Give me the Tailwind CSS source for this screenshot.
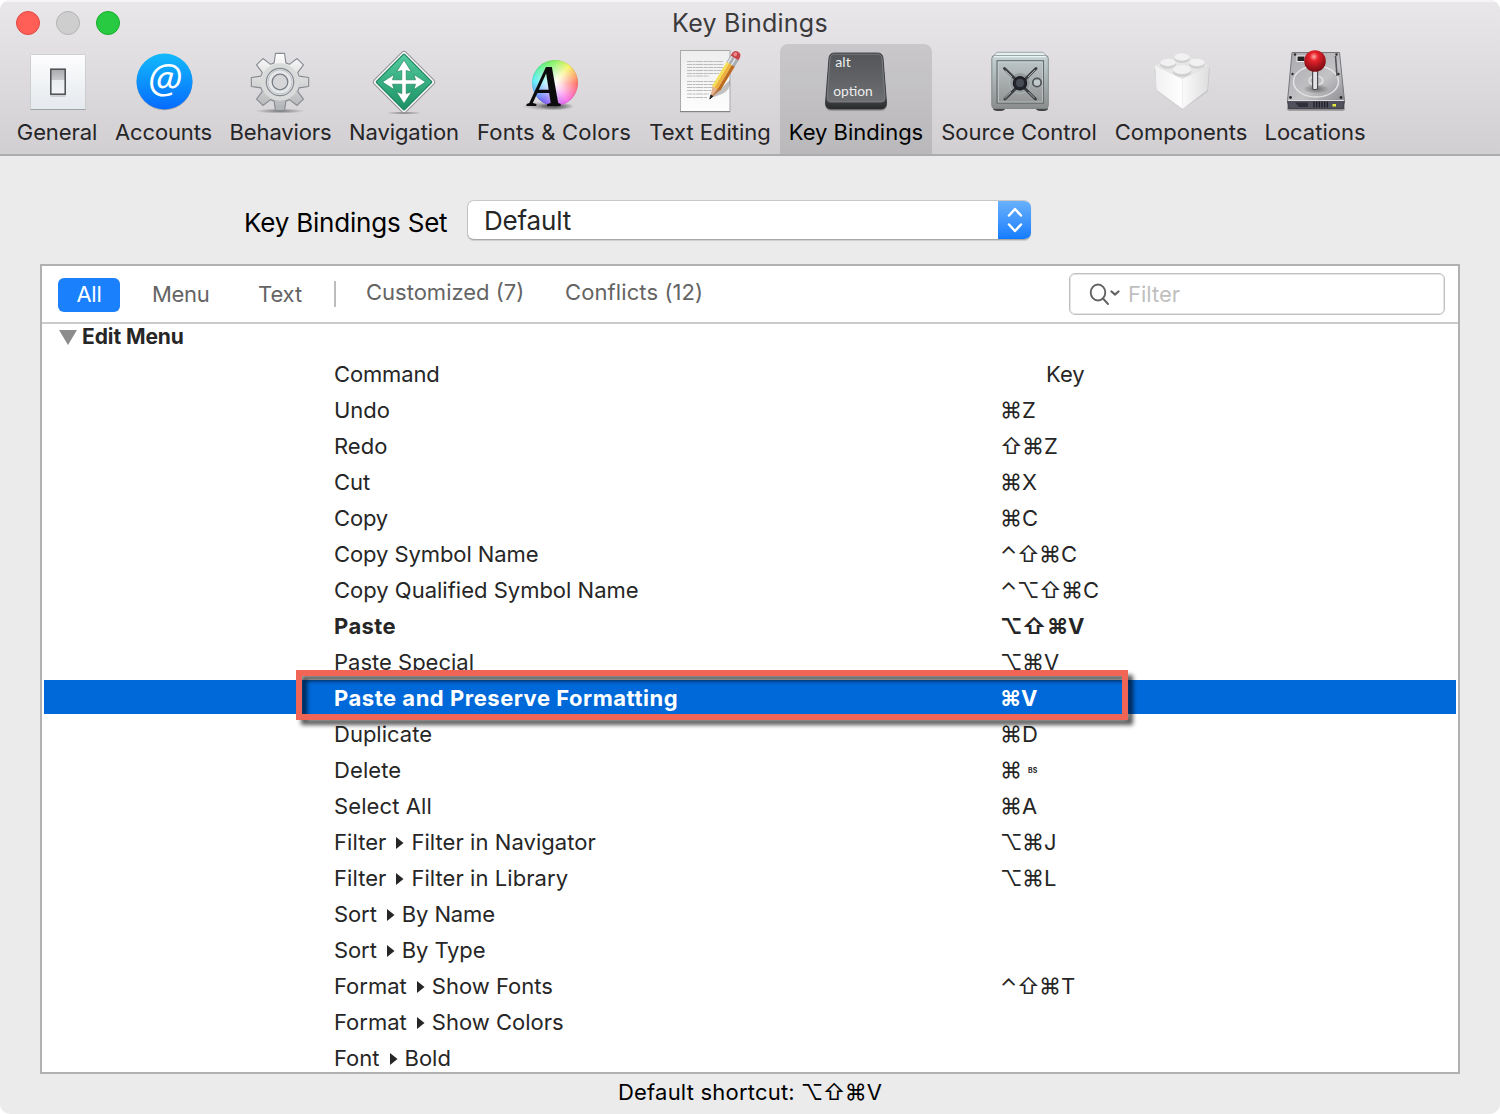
<!DOCTYPE html>
<html lang="en">
<head>
<meta charset="utf-8">
<title>Key Bindings</title>
<script src="https://cdn.jsdelivr.net/npm/@tailwindcss/browser@4"></script>
</head>
<body class="bg-white font-['Inter','Liberation_Sans',sans-serif] text-[#262626]">
<div class="w-[1500px] h-[1114px] overflow-hidden rounded-[10px] bg-[#ebebeb] flex flex-col">

  <header class="h-[156px] shrink-0 flex flex-col bg-linear-to-b from-[#e9e7ea] to-[#d1cfd2] border-t-2 border-t-[#f4f3f5] border-b-2 border-b-[#acabad]">
    <div class="h-[42px] shrink-0 grid grid-cols-3 items-center px-4">
      <div class="flex gap-4">
        <span class="size-6 rounded-full bg-[#ff5f57] border border-[#e2463f]"></span>
        <span class="size-6 rounded-full bg-[#cfcecf] border border-[#b4b3b5]"></span>
        <span class="size-6 rounded-full bg-[#28ca41] border border-[#14ae2b]"></span>
      </div>
      <h1 class="text-center text-[#3b3a3c] text-[25px] leading-[42px] tracking-[0.25px] whitespace-nowrap">Key Bindings</h1>
    </div>
    <nav class="flex pl-2 h-[110px] text-[22px] text-[#262527]">
      <div class="w-[98px] flex flex-col items-center">
        <svg class="size-[70px] shrink-0" viewBox="22 44 70 70">
          <defs><linearGradient id="gn" x2="0" y2="1"><stop stop-color="#fdfdfe"/><stop offset="1" stop-color="#e4e9ed"/></linearGradient>
          <linearGradient id="sw" x2="0" y2="1"><stop stop-color="#a8aaad"/><stop offset=".45" stop-color="#c9cbcd"/><stop offset=".45" stop-color="#e9ecee"/><stop offset="1" stop-color="#f2f4f5"/></linearGradient></defs>
          <rect x="30.500" y="54.500" width="55" height="55" rx="1" fill="url(#gn)" stroke="#c5c7ca" stroke-width=".8"/>
          <path d="M30.500 109.500h55" stroke="#9fa3a8"/>
          <rect x="50" y="69" width="16" height="28" rx="2" fill="#000" opacity=".12"/>
          <rect x="50.800" y="69.200" width="14.400" height="25" fill="url(#sw)" stroke="#4c4d50" stroke-width="1.500"/>
        </svg>
        <span class="leading-[36px] tracking-[-0.1px] whitespace-nowrap">General</span>
      </div>
      <div class="w-[115px] flex flex-col items-center">
        <svg class="size-[70px] shrink-0" viewBox="128.500 44 70 70">
          <defs><linearGradient id="ac" x2="0" y2="1"><stop stop-color="#12bafa"/><stop offset="1" stop-color="#066bff"/></linearGradient></defs>
          <circle cx="164" cy="82.300" r="28" fill="#000" opacity=".2"/>
          <circle cx="164" cy="81.500" r="28" fill="url(#ac)"/>
          <text x="164.500" y="92.500" text-anchor="middle" font-family="Open Sans" font-style="italic" font-size="40" fill="#fff">@</text>
        </svg>
        <span class="leading-[36px] tracking-[-0.12px] whitespace-nowrap">Accounts</span>
      </div>
      <div class="w-[119px] flex flex-col items-center">
        <svg class="size-[70px] shrink-0" viewBox="245.500 44 70 70">
          <defs><linearGradient id="ge" gradientUnits="userSpaceOnUse" x1="0" y1="53" x2="0" y2="111"><stop stop-color="#fff"/><stop offset="1" stop-color="#b0b1b2"/></linearGradient>
          <radialGradient id="gs"><stop stop-color="#000" stop-opacity=".45"/><stop offset="1" stop-color="#000" stop-opacity="0"/></radialGradient></defs>
          <ellipse cx="279.500" cy="111" rx="25" ry="2.500" fill="url(#gs)"/>
          <path id="gear" transform="translate(-.5 0)" fill="url(#ge)" stroke="#868b92" stroke-width="1.100" stroke-linejoin="round" d=""/>
          <circle cx="279.500" cy="82" r="18.800" fill="#d9dada"/>
          <circle cx="279.500" cy="82" r="13.700" fill="#e6e7e8" stroke="#858a92" stroke-width="1.200"/>
          <circle cx="279.500" cy="82" r="12" fill="none" stroke="#b5b8bc" stroke-width=".8"/>
          <circle cx="279.500" cy="82" r="7.800" fill="#d6d5d7" stroke="#7a7f87" stroke-width="1.300"/>
        </svg>
        <span class="leading-[36px] tracking-[-0.12px] whitespace-nowrap">Behaviors</span>
      </div>
      <div class="w-[128px] flex flex-col items-center">
        <svg class="size-[70px] shrink-0" viewBox="369 44 70 70">
          <defs><linearGradient id="nv" x2="1" y2="1"><stop stop-color="#54cba0"/><stop offset="1" stop-color="#1b9065"/></linearGradient></defs>
          <ellipse cx="404" cy="113" rx="18" ry="1.400" fill="url(#gs)"/>
          <g transform="rotate(45 404 82)">
            <rect x="381.500" y="59.500" width="45" height="45" rx="3" fill="#fdfdfd" stroke="#8f8f92" stroke-width="1"/>
            <rect x="384" y="62" width="40" height="40" rx="1" fill="url(#nv)" stroke="#1a7d59" stroke-width="1"/>
          </g>
          <path fill="#fff" stroke="#1c7e59" stroke-width=".6" d="M404 60L411.500 72L406.200 70.500V79.800H415.500L414 74.500L425.500 82L414 89.500L415.500 84.200H406.200V93.500L411.500 92L404 103.500L396.500 92L401.800 93.500V84.200H392.500L394 89.500L382.500 82L394 74.500L392.500 79.800H401.800V70.500L396.500 72Z"/>
        </svg>
        <span class="leading-[36px] tracking-[-0.08px] whitespace-nowrap">Navigation</span>
      </div>
      <div class="w-[172px] flex flex-col items-center">
        <svg class="size-[70px] shrink-0 overflow-visible" viewBox="519 44 70 70">
          <ellipse cx="548" cy="106" rx="26" ry="4.500" fill="url(#gs)"/>
          <ellipse cx="556" cy="106.500" rx="18" ry="4" fill="url(#gs)"/>
          <foreignObject x="532" y="60" width="46" height="46"><div class="size-[46px] rounded-full bg-[radial-gradient(circle,#fff_0%,#ffffffcc_20%,#ffffff00_78%),conic-gradient(#7cf04e,#f6f24e_40deg,#ff5a4e_92deg,#fb58e8_145deg,#5a4ff5_215deg,#3fe8f8_275deg,#45f08a_315deg,#5cee46_345deg,#7cf04e)] shadow-[inset_0_0_1px_#0006]"></div></foreignObject>
          <text x="529" y="106" font-family="Liberation Serif" font-weight="bold" font-style="italic" font-size="60" textLength="34" lengthAdjust="spacingAndGlyphs" fill="#0c0c0c">A</text>
        </svg>
        <span class="leading-[36px] tracking-[0.2px] whitespace-nowrap">Fonts &amp; Colors</span>
      </div>
      <div class="w-[140px] flex flex-col items-center">
        <svg class="size-[70px] shrink-0" viewBox="675 44 70 70">
          <defs><linearGradient id="pg" x2="0" y2="1"><stop stop-color="#eeeeee"/><stop offset="1" stop-color="#fdfdfd"/></linearGradient></defs>
          <rect x="680.500" y="50.500" width="49.500" height="61" fill="url(#pg)" stroke="#a9a9aa" stroke-width="1"/>
          <path d="M680 111.700h50" stroke="#7c7c7d" stroke-width="1"/>
          <g stroke="#bbbbbb" stroke-width="1.200" stroke-dasharray="5 .6 3 .5 7 .6 4 .5"><path d="M687 61.500h36M687 64.500h36M687 67.500h36M687 70.500h35M687 73.500h32M687 76h22M687 81.500h29M687 84.500h28M687 87.500h27M687 90.500h24M687 94h22M687 97.500h20"/></g>
          <path d="M710 98.500L730 80Q731 90 722 94Z" fill="#000" opacity=".22"/>
          <g transform="translate(709.800 99) rotate(31)">
            <path d="M0 0L-4.700 -14H4.700Z" fill="#e5b38b"/><path d="M0 0L4.700 -14H1.500Z" fill="#b97b50"/>
            <path d="M0 0L-1.200 -4H1.200Z" fill="#222" stroke="#222" stroke-width=".8"/>
            <path d="M-4.700 -12V-41H-1.500V-12.500Z" fill="#f4e05d"/><path d="M-1.800 -12.500V-41H1.500V-12Z" fill="#efb13e"/><path d="M1.500 -12V-41H4.700V-13Z" fill="#bd6a21"/>
            <rect x="-4.700" y="-48" width="9.400" height="7.500" fill="#a9adb1"/><path d="M-3 -48v7.500M1 -48v7.500" stroke="#e3e6e8" stroke-width="1.500"/>
            <path d="M-4.500 -48V-51Q-4 -55 0 -55T4.500 -51V-48Z" fill="#c8434a"/><ellipse cx="-1.200" cy="-51.500" rx="1.800" ry="2" fill="#e98a8c"/>
          </g>
        </svg>
        <span class="leading-[36px] whitespace-nowrap">Text Editing</span>
      </div>
      <div class="w-[152px] flex flex-col items-center rounded-t-lg bg-black/11 text-black">
        <svg class="size-[70px] shrink-0" viewBox="821 44 70 70">
          <defs><linearGradient id="kc" x2="0" y2="1"><stop stop-color="#535558"/><stop offset="1" stop-color="#6d6f72"/></linearGradient>
          <linearGradient id="kb" x2="0" y2="1"><stop offset=".75" stop-color="#505255"/><stop offset="1" stop-color="#28292b"/></linearGradient></defs>
          <path d="M829 60Q829 54 834 54H877Q882 54 883 60L887 104Q887 111 881 111H831Q825 111 825.500 104Z" fill="#000" opacity=".2"/>
          <path d="M829 58Q829.500 53 834.500 53H877.500Q882.500 53 883 58L886.500 103Q886.500 109 881 109H831Q825.500 109 825.500 103Z" fill="url(#kb)" stroke="#2d2e30" stroke-width=".8"/>
          <path d="M830 58.500Q830.500 54.200 834.500 54.200H877.500Q881.500 54.200 882 58.500L885 98Q885 102 881 102H831Q827 102 827.200 98Z" fill="url(#kc)" stroke="#85878a" stroke-width=".8"/>
          <text x="835.300" y="67" font-family="Lato" font-size="12.500" textLength="15.500" lengthAdjust="spacingAndGlyphs" fill="#ededed">alt</text>
          <text x="833.300" y="96" font-family="Lato" font-size="12.500" textLength="39.500" lengthAdjust="spacingAndGlyphs" fill="#ededed">option</text>
        </svg>
        <span class="leading-[36px] whitespace-nowrap">Key Bindings</span>
      </div>
      <div class="w-[174px] flex flex-col items-center">
        <svg class="size-[70px] shrink-0" viewBox="984 44 70 70">
          <defs><linearGradient id="sf" x2="0" y2="1"><stop stop-color="#c5d4d6"/><stop offset="1" stop-color="#8b8d8e"/></linearGradient>
          <linearGradient id="sd" x2="0" y2="1"><stop stop-color="#bbc5c6"/><stop offset="1" stop-color="#949494"/></linearGradient></defs>
          <ellipse cx="999" cy="109" rx="6" ry="2" fill="#454648"/><ellipse cx="1042" cy="109" rx="6" ry="2" fill="#454648"/>
          <path d="M997 52.300H1043L1048 57H992Z" fill="#e3efef" stroke="#8e9899" stroke-width=".8"/>
          <rect x="991.800" y="55.500" width="56.500" height="53" rx="3" fill="url(#sf)" stroke="#7d8485" stroke-width=".9"/>
          <path d="M994 56.500h52" stroke="#e8f3f3" stroke-width="1.500"/>
          <rect x="997" y="60.700" width="46.500" height="42.500" fill="url(#sd)" stroke="#666c6d" stroke-width="1.100"/>
          <rect x="998.300" y="62" width="44" height="40" fill="none" stroke="#d4dddd" stroke-width=".5"/>
          <circle cx="1020" cy="83" r="10.500" fill="#979d9e" stroke="#adb8b9" stroke-width="1"/>
          <path d="M1004.500 68.500L1035.500 99M1036 68.500L1005 99" stroke="#3b3d40" stroke-width="2.800" stroke-linecap="round"/>
          <path d="M1012 77L1005.500 70.500M1028 77L1035 70M1011 92L1005 98.500M1028.500 92L1034.500 98" stroke="#b9bdbf" stroke-width=".9"/>
          <circle cx="1020" cy="83.300" r="6.700" fill="#22252c" stroke="#14161a"/>
          <circle cx="1020" cy="83" r="4" fill="#474c57"/>
          <circle cx="1037" cy="82.500" r="4.200" fill="#c2cacb" stroke="#4e5354" stroke-width="1.700"/>
        </svg>
        <span class="leading-[36px] whitespace-nowrap">Source Control</span>
      </div>
      <div class="w-[150px] flex flex-col items-center">
        <svg class="size-[70px] shrink-0" viewBox="1146 44 70 70">
          <defs><linearGradient id="bl"><stop stop-color="#f1f1f1"/><stop offset="1" stop-color="#fff"/></linearGradient><linearGradient id="br"><stop stop-color="#fafafa"/><stop offset="1" stop-color="#dededf"/></linearGradient></defs>
          <path d="M1154 70L1182 55L1210 68L1208 92L1182 109.500L1158 92Z" fill="#000" opacity=".08"/>
          <path d="M1155 65.500L1182.500 54L1209 65.500L1182.500 79Z" fill="#e6e6e6"/>
          <path d="M1155 65.500L1182.500 79V109L1158 91Q1156.800 90 1156.600 88Z" fill="url(#bl)"/>
          <path d="M1209 65.500L1182.500 79V109L1206 91Q1207.200 90 1207.400 88Z" fill="url(#br)"/>
          <g fill="#d0d0d1"><ellipse cx="1182" cy="59" rx="8" ry="4"/><ellipse cx="1168" cy="64.500" rx="8" ry="4.200"/><ellipse cx="1197" cy="64.500" rx="8" ry="4.200"/><ellipse cx="1182" cy="72" rx="9.200" ry="5"/></g>
          <g fill="#f1f1f1"><ellipse cx="1182" cy="57" rx="7.700" ry="3.700"/><ellipse cx="1168" cy="62.500" rx="7.700" ry="3.700"/><ellipse cx="1197" cy="62.500" rx="7.700" ry="3.700"/><ellipse cx="1182" cy="69.500" rx="9" ry="4.600"/></g>
        </svg>
        <span class="leading-[36px] whitespace-nowrap">Components</span>
      </div>
      <div class="w-[118px] flex flex-col items-center">
        <svg class="size-[70px] shrink-0" viewBox="1280 44 70 70">
          <defs><linearGradient id="hd" x2="1" y2="1"><stop stop-color="#a9a9ad"/><stop offset=".6" stop-color="#c3c3c6"/><stop offset="1" stop-color="#8e8e92"/></linearGradient>
          <radialGradient id="rb" cx=".45" cy=".3" r=".65"><stop stop-color="#ffb0a8"/><stop offset=".3" stop-color="#e8222b"/><stop offset="1" stop-color="#7e0d14"/></radialGradient></defs>
          <rect x="1287" y="106" width="58" height="5" rx="2" fill="#000" opacity=".25"/>
          <path d="M1292 52.500H1339.500L1344.500 101H1287.500Z" fill="url(#hd)" stroke="#77777b" stroke-width="1"/>
          <path d="M1287.500 100.500H1344.500L1343.500 108.700H1288.500Z" fill="#50515c" stroke="#303138" stroke-width=".8"/>
          <path d="M1287.500 100.500h57" stroke="#dcdce0"/>
          <path d="M1295 102.500L1308 102.500V107H1299Z" fill="#2e2f38"/>
          <path d="M1314 101.500v6M1316.700 101.500v6M1319.400 101.500v6M1322 101.500v6M1324.700 101.500v6M1327.400 101.500v6" stroke="#1d1e25" stroke-width="1.300"/>
          <rect x="1332.500" y="104" width="3.500" height="2.500" fill="#e3ec3b"/>
          <ellipse cx="1316" cy="81.500" rx="22.500" ry="15.500" fill="none" stroke="#e4e4e7" stroke-width="1.400"/>
          <ellipse cx="1316" cy="89" rx="13" ry="5" fill="url(#gs)"/>
          <ellipse cx="1316" cy="80.500" rx="7" ry="4.500" fill="none" stroke="#e9e9eb" stroke-width="1.200"/>
          <rect x="1297" y="56" width="8" height="5.500" fill="#222" stroke="#efefef" stroke-width="1"/>
          <path d="M1335.500 56L1337 76" stroke="#55555a" stroke-width="1.600"/>
          <g fill="#2a2a2d"><circle cx="1295" cy="54.500" r="1.200"/><circle cx="1336.500" cy="54.500" r="1.200"/><circle cx="1292.500" cy="74" r="1.200"/><circle cx="1338.500" cy="74" r="1.200"/><circle cx="1290.500" cy="97.500" r="1.400"/><circle cx="1341" cy="97.500" r="1.400"/></g>
          <rect x="1312.600" y="70" width="5" height="19.500" rx="1.500" fill="#e3e3e5" stroke="#4b4b4f" stroke-width="1.200"/>
          <circle cx="1315" cy="61" r="10.800" fill="url(#rb)"/>
        </svg>
        <span class="leading-[36px] whitespace-nowrap">Locations</span>
      </div>
    </nav>
  </header>

  <main class="px-10 pt-11 flex flex-col">
    <div class="h-10 flex items-center pl-[204px]">
      <label class="w-[223px] pt-1.5 text-[26px] leading-9 tracking-[-0.2px] text-black whitespace-nowrap">Key Bindings Set</label>
      <div class="w-[564px] h-10 flex rounded-[7px] overflow-hidden bg-white border border-r-0 border-t-[#c8c8c8] border-l-[#c4c4c4] border-b-[#a8a8a8] shadow-[0_1px_1px_#0002]">
        <span class="flex-1 pl-4 text-[26px] leading-[40px] tracking-[-0.18px]">Default</span>
        <span class="-my-px w-[33px] bg-linear-to-b from-[#6ab2fa] to-[#0a7aff] flex items-center justify-center">
          <svg class="w-4 h-7" viewBox="0 0 16 28" fill="none" stroke="#fff" stroke-width="2.500" stroke-linecap="round" stroke-linejoin="round"><path d="M2 9.500L8 3L14 9.500M2 18.500L8 25L14 18.500"/></svg>
        </span>
      </div>
    </div>

    <section class="mt-6 w-[1420px] h-[810px] bg-white border-2 border-[#b1b1b1] flex flex-col relative">
      <div class="h-[58px] shrink-0 border-b-2 border-[#cbcbcb] flex items-center pl-4 pr-[13px] text-[22px] text-[#646464] whitespace-nowrap">
        <span class="w-[62px] h-[34px] mt-0.5 rounded-md bg-[#1a80fc] text-white text-center leading-[32px] tracking-[-0.2px]">All</span>
        <span class="ml-[32px] w-[106px] tracking-[-0.3px]">Menu</span>
        <span class="w-[76px] tracking-[-0.1px]">Text</span>
        <span class="w-0.5 h-[26px] bg-[#bdbdbd]"></span>
        <span class="ml-[30px] w-[199px] pb-1">Customized (7)</span>
        <span class="pb-1 tracking-[0.1px]">Conflicts (12)</span>
        <div class="ml-auto w-[376px] h-[42px] rounded-md border border-[#c0c0c0] shadow-[inset_0_0_0_1px_#e4e4e4] flex items-center pl-[19px] text-[#bfbfbf]">
          <svg class="w-8 h-6 mr-[7px]" viewBox="0 0 32 24" fill="none" stroke="#636363" stroke-width="1.900" stroke-linecap="round"><ellipse cx="9" cy="10.500" rx="7.300" ry="8"/><path d="M14 16.500L19 22"/><path d="M22.500 9.500L26 12.500L29.500 9.500" stroke-width="2.300"/></svg>
          Filter
        </div>
      </div>
      <div class="flex-1 min-h-0 overflow-hidden flex flex-col text-[22px] leading-[36px] whitespace-nowrap">
        <div class="h-8 shrink-0 flex items-center pl-[17px] font-bold text-[21px] tracking-[-0.08px] leading-[26px] pb-[6px]">
          <svg class="w-[18px] h-4 mr-[5px]" viewBox="0 0 18 16"><path d="M0 1H18L9 16Z" fill="#8c8c8c"/></svg>
          Edit Menu
        </div>
        <div id="rows"></div>
      </div>
      <div class="absolute left-[254px] top-[404px] w-[832px] h-[50px] border-6 border-[#f16556] drop-shadow-[5px_5px_2px_#000000a6]"></div>
    </section>

    <p class="h-[40px] text-center text-[22px] leading-[37px] text-black whitespace-nowrap"><span class="tracking-[0.2px]">Default shortcut:</span><span id="hint" class="inline-block ml-1.5"></span></p>
  </main>
</div>
<script>
  const TRI = '<svg class="inline-block w-2 h-3.5 ml-[10px] mr-[7px] align-[0px]" viewBox="0 0 8 14"><path d="M0 1L7.500 7L0 13Z" fill="#262626"/></svg>';
  const symbols = { '⌃': 'w-[17px]', '⌥': 'w-[22px]', '⇧': 'w-[22px]', '⌘': 'w-[22px]' };
  const bold = { '⌥': 'w-[22px]', '⇧': 'w-[25px]', '⌘': 'w-[21px]' };
  const keys = (s, widths = symbols) => [...s].map(c => widths[c] ? `<span class="inline-block ${widths[c]}">${c}</span>` : c).join('');
  const rows = [
    ['Command', '', 'tracking-[-0.15px]'], ['Undo', '⌘Z'], ['Redo', '⇧⌘Z'], ['Cut', '⌘X'], ['Copy', '⌘C', 'tracking-[-0.15px]'],
    ['Copy Symbol Name', '⌃⇧⌘C', 'tracking-[-0.08px]'], ['Copy Qualified Symbol Name', '⌃⌥⇧⌘C'], ['Paste', '⌥⇧⌘V', 'tracking-[0.4px]', 'bold'],
    ['Paste Special', '⌥⌘V'], ['Paste and Preserve Formatting', '⌘V', 'tracking-[0.52px]', 'selected'], ['Duplicate', '⌘D'],
    ['Delete', '⌘', 'tracking-[0.1px]'], ['Select All', '⌘A', 'tracking-[0.1px]'], ['Filter>Filter in Navigator', '⌥⌘J', 'tracking-[0.06px]'], ['Filter>Filter in Library', '⌥⌘L', 'tracking-[0.06px]'],
    ['Sort>By Name', '', 'tracking-[-0.1px]'], ['Sort>By Type', '', 'tracking-[-0.1px]'], ['Format>Show Fonts', '⌃⇧⌘T'], ['Format>Show Colors', ''], ['Font>Bold', '']
  ];
  document.getElementById('rows').innerHTML = rows.map(([name, combo, tracking = '', mode]) => {
    const look = mode === 'selected' ? 'bg-[#0069d9] text-white font-bold' : mode === 'bold' ? 'font-bold' : '';
    const key = name === 'Command' ? '<span class="pl-[46px]">Key</span>' : keys(combo, mode ? bold : symbols) + (name === 'Delete' ? '<span class="text-[7px] font-bold align-[5px] ml-[6px]">BS</span>' : '');
    return `<div class="h-9"><div class="mx-0.5 h-[34px] flex ${look}"><span class="pl-[290px] w-[956px] ${tracking}">${name.replace('>', TRI)}</span><span>${key}</span></div></div>`;
  }).join('');
  document.getElementById('hint').innerHTML = keys('⌥⇧⌘V');

  // Gear outline: eight teeth around (280, 82)
  let d = '';
  const P = (r, a) => (280 + r * Math.sin(a * Math.PI / 180)).toFixed(2) + ' ' + (82 - r * Math.cos(a * Math.PI / 180)).toFixed(2);
  for (let i = 0; i < 8; i++) { const a = i * 45; d += (i ? 'L' : 'M') + P(20, a - 17) + 'L' + P(29, a - 9) + 'L' + P(29, a + 9) + 'L' + P(20, a + 17); }
  document.getElementById('gear').setAttribute('d', d + 'Z');
</script>
</body>
</html>
